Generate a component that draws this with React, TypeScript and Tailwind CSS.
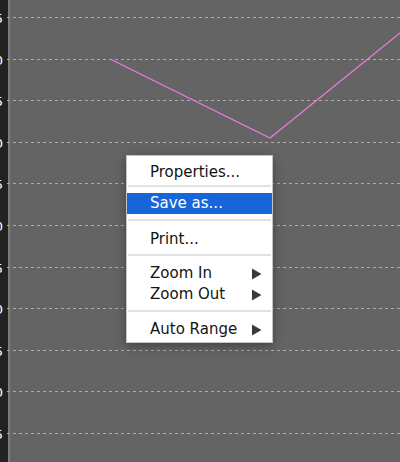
import React from 'react'

const gridYs = Array.from({ length: 11 }, (_, i) => Math.round(17 + i * 41.6) + 0.5)

type Item = { label: string; active?: boolean; submenu?: boolean }

const groups: { items: Item[]; sep: string }[] = [
    { items: [{ label: 'Properties...' }], sep: 'mt-[2px] mb-[6px]' },
    { items: [{ label: 'Save as...', active: true }], sep: 'mt-[5px] mb-[8px]' },
    { items: [{ label: 'Print...' }], sep: 'mt-[4px] mb-[7px]' },
    { items: [{ label: 'Zoom In', submenu: true }, { label: 'Zoom Out', submenu: true }], sep: 'mt-[5px] mb-[7px]' },
    { items: [{ label: 'Auto Range', submenu: true }], sep: '' },
]

function Chart() {
    return (
        <svg width="400" height="462" viewBox="0 0 400 462" className="block">
            <rect x="0" y="0" width="400" height="462" fill="#646464" />
            <rect x="0" y="0" width="8" height="462" fill="#222222" />
            <rect x="8" y="0" width="2" height="462" fill="#7c7c7c" />
            {gridYs.map((y, i) => (
                <g key={y}>
                    <line x1="7" x2="400" y1={y} y2={y} stroke="#ababab" strokeWidth="1" strokeDasharray="3 3" />
                    <text
                        x="3"
                        y={y + 5}
                        textAnchor="end"
                        fill="#ffffff"
                        fontSize="13"
                        fontFamily="'DejaVu Sans', sans-serif"
                    >
                        {i % 2 === 0 ? '5' : '0'}
                    </text>
                </g>
            ))}
            <polyline points="110,59 270,138 400,33" fill="none" stroke="#f07ad8" strokeWidth="1.3" />
        </svg>
    )
}

function Arrow() {
    return (
        <svg width="10" height="12" viewBox="0 0 10 12" className="block">
            <path d="M0 0.5 L9.5 6 L0 11.5 Z" fill="#3a3a3a" />
        </svg>
    )
}

export default function App() {
    return (
        <div className="relative w-[400px] h-[462px] overflow-hidden bg-[#646464] font-['DejaVu_Sans',sans-serif]">
            <Chart />

            {/* context menu */}
            <div className="absolute left-[126px] top-[155px] w-[147px] bg-white border border-[#c4c4c4] pt-[6px] pb-[2px] shadow-[0_3px_10px_rgba(0,0,0,0.35)]">
                {groups.map((g, gi) => (
                    <div key={gi}>
                        {g.items.map((it) => (
                            <div
                                key={it.label}
                                className={
                                    it.active
                                        ? 'flex items-center justify-between h-[21px] pl-[23px] pr-[10px] bg-[#1766d9] text-white text-[15px]'
                                        : 'flex items-center justify-between h-[21px] pl-[23px] pr-[10px] text-[#141414] text-[15px]'
                                }
                            >
                                <span className="leading-none">{it.label}</span>
                                {it.submenu && <Arrow />}
                            </div>
                        ))}
                        {g.sep && <div className={`h-[2px] bg-[#e2e2e2] mx-px ${g.sep}`} />}
                    </div>
                ))}
            </div>
        </div>
    )
}
